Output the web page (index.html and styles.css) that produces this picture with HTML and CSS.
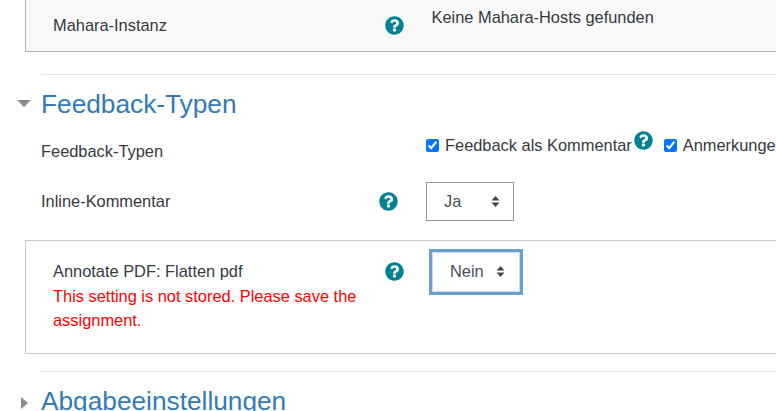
FILE: index.html
```html
<!DOCTYPE html>
<html lang="de">
<head>
<meta charset="utf-8">
<title>Feedback-Typen</title>
<link rel="stylesheet" href="styles.css">
</head>
<body>
<svg class="defs" width="0" height="0" aria-hidden="true">
  <symbol id="q" viewBox="0 0 512 512"><path d="M504 256c0 137-111 248-248 248S8 393 8 256 119 8 256 8s248 111 248 248zM263 90c-54 0-89 23-116 64-4 5-3 12 2 16l35 26c5 4 13 3 17-2 18-23 30-36 57-36 20 0 45 13 45 33 0 15-12 22-32 33-23 13-54 30-54 71v8c0 7 5 12 12 12h56c7 0 12-5 12-12v-5c0-29 83-30 83-105 0-57-59-103-117-103zm-7 240c-25 0-46 21-46 46s21 46 46 46 46-21 46-46-21-46-46-46z"/></symbol>
</svg>
<main class="page">
  <div class="box box-top">
    <div class="label-col">Mahara-Instanz</div>
    <svg class="help"><use href="#q"/></svg>
    <div class="static">Keine Mahara-Hosts gefunden</div>
  </div>
  <hr class="rule rule-first">
  <h3 class="section"><span class="caret caret-down"></span><span>Feedback-Typen</span></h3>
  <div class="row row-types">
    <div class="label-col label-types">Feedback-Typen</div>
    <div class="checks">
      <label class="check"><input type="checkbox" checked>Feedback als Kommentar</label>
      <svg class="help help-inline"><use href="#q"/></svg>
      <label class="check check-second"><input type="checkbox" checked>Anmerkungen</label>
    </div>
  </div>
  <div class="row row-inline">
    <div class="label-col">Inline-Kommentar</div>
    <svg class="help"><use href="#q"/></svg>
    <div class="select select-ja">Ja<svg class="updown" viewBox="0 0 9 11"><path d="M4.500 0 8.500 4.500H.5zM.5 6.500h8L4.500 11z"/></svg></div>
  </div>
  <div class="box box-flatten">
    <div class="label-col">
      <div>Annotate PDF: Flatten pdf</div>
      <div class="warn">This setting is not stored. Please save the assignment.</div>
    </div>
    <svg class="help"><use href="#q"/></svg>
    <div class="select select-nein">Nein<svg class="updown" viewBox="0 0 9 11"><path d="M4.500 0 8.500 4.500H.5zM.5 6.500h8L4.500 11z"/></svg></div>
  </div>
  <hr class="rule rule-second">
  <h3 class="section section-last"><span class="caret caret-right"></span><span>Abgabeeinstellungen</span></h3>
</main>
</body>
</html>
```
FILE: styles.css
```css
html, body {
  margin: 0;
  padding: 0;
  height: 411px;
  overflow: hidden;
  background: #fff;
}
body {
  font: 16.4px/24.6px "Liberation Sans", Arial, sans-serif;
  color: #343a40;
}
.defs { position: absolute; }
.page {
  width: 1000px;
  padding-left: 25px;
}
.box {
  display: flex;
  align-items: flex-start;
  box-sizing: border-box;
  border: 1px solid #c8c8c8;
  border-right: 0;
  padding-left: 27px;
}
.box-top {
  height: 52px;
  border-top: 0;
  border-color: #b4b4b4;
  background: #f8f8f8;
  padding-top: 13px;
}
.label-col { width: 332px; flex: none; }
.help {
  width: 19px;
  height: 19px;
  flex: none;
  fill: #008196;
}
.static { margin-left: 27.5px; margin-top: -8px; }
.box-top .help { margin-top: 3px; }
.rule {
  border: 0;
  border-top: 1px solid #e3e3e3;
  margin: 0 0 0 16px;
}
.rule-first { margin-top: 22px; }
.rule-second { margin-top: 17px; }
.section {
  position: relative;
  margin: 0 0 0 16px;
  font-weight: 400;
  font-size: 26.25px;
  line-height: 31px;
  color: #337ab7;
  padding-top: 14px;
}
.caret { position: absolute; width: 0; height: 0; }
.caret-down {
  left: -24px;
  top: 25px;
  border-left: 7px solid transparent;
  border-right: 7px solid transparent;
  border-top: 7px solid #8c8c8c;
}
.caret-right {
  left: -20px;
  top: 25px;
  border-top: 6.5px solid transparent;
  border-bottom: 6.5px solid transparent;
  border-left: 7px solid #8c8c8c;
}
.row { display: flex; margin-left: 16px; align-items: flex-start; }
.row-types { margin-top: 16px; }
.label-types { padding-top: 3px; width: 385px; }
.checks { display: flex; align-items: flex-start; margin-top: -3px; white-space: nowrap; }
.check { display: flex; align-items: center; }
.check input {
  width: 13px;
  height: 13px;
  margin: 0 6px 0 0;
  accent-color: #0075ff;
}
.help-inline { margin-left: 2px; margin-top: -2px; }
.check-second { margin-left: 11px; }
.row-inline { margin-top: 18px; height: 39px; align-items: center; }
.row-inline .label-col { width: 338px; }
.row-inline .select { margin-left: 28px; }
.select {
  position: relative;
  box-sizing: border-box;
  display: flex;
  align-items: center;
  background: #fff;
  color: #495057;
}
.select-ja {
  width: 88px;
  height: 39px;
  border: 1px solid #8f959e;
  padding-left: 17px;
}
.select-nein {
  width: 94px;
  height: 46px;
  border: 3px solid #6ba0cf;
  margin-left: 25px;
  margin-top: 8px;
  padding-left: 18px;
  outline: 1px solid #c4d9ec;
  outline-offset: -4px;
}
.updown { position: absolute; width: 9px; height: 11px; fill: #40464d; right: 13px; top: 50%; margin-top: -5.5px; }
.select-nein .updown { right: 15px; }
.box-flatten {
  margin-top: 19px;
  height: 114px;
}
.box-flatten .label-col { margin-top: 18px; }
.box-flatten .help { margin-top: 21px; }
.warn { color: #f00; margin-top: 1px; line-height: 24px; width: 320px; }
```
